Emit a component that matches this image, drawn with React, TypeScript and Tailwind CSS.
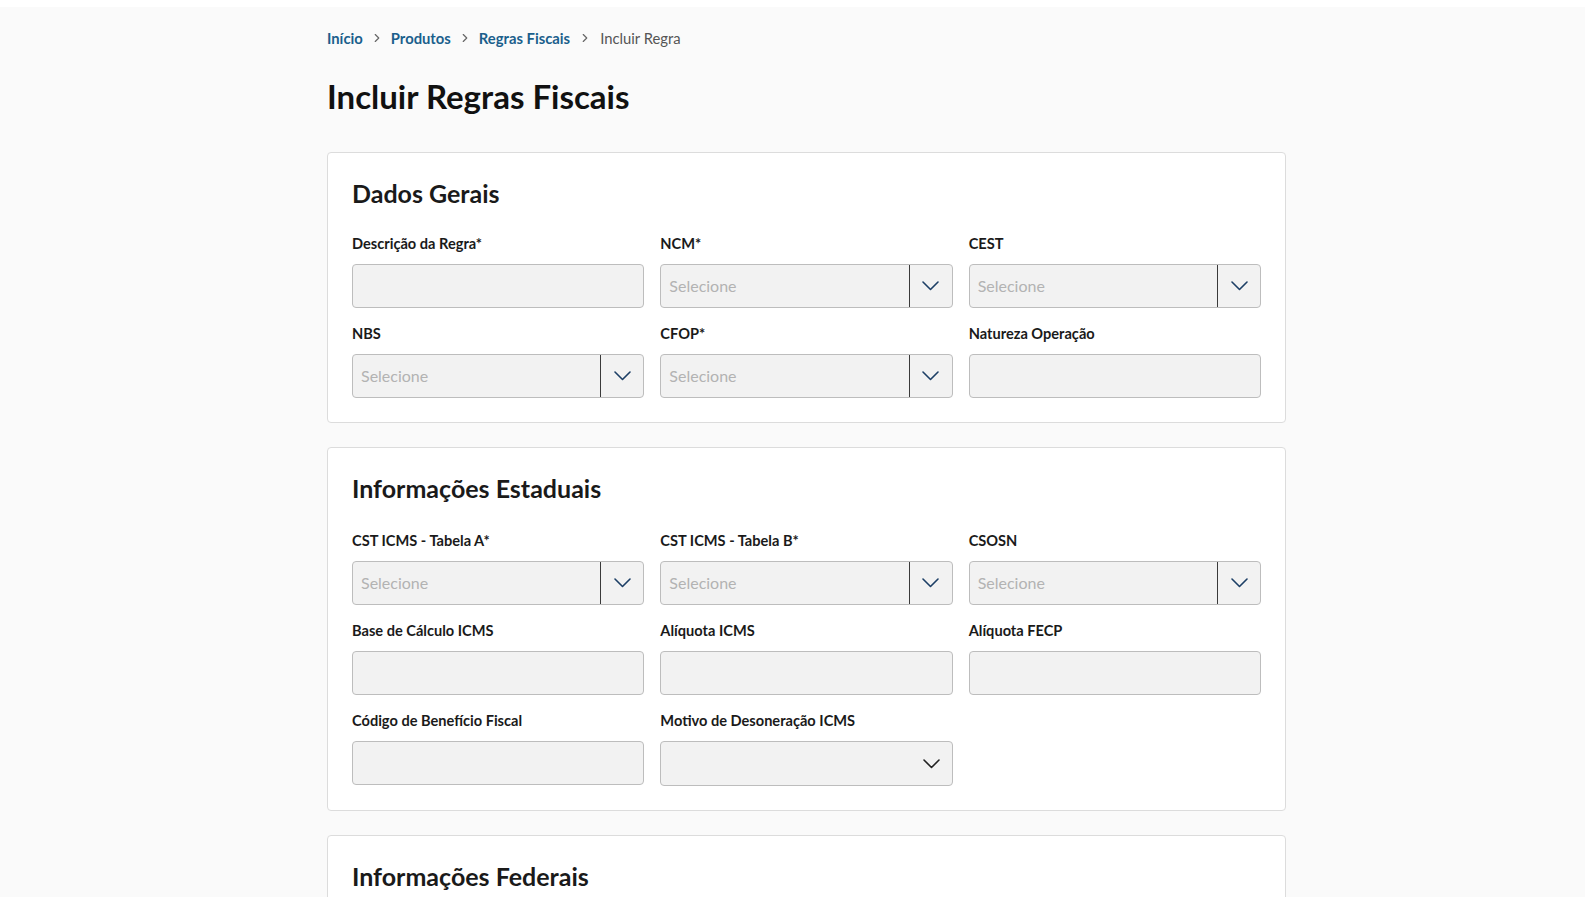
import { ChevronRight } from 'lucide-react'

const font = { fontFamily: '"Lato", "Noto Sans", sans-serif' }

function Chevron({ color = '#1d3f66' }: { color?: string }) {
  return (
    <svg width="17" height="10" viewBox="0 0 17 10" fill="none">
      <polyline points="1,1 8.5,8.5 16,1" stroke={color} strokeWidth="1.6" strokeLinecap="round" strokeLinejoin="round" />
    </svg>
  )
}

function Label({ children }: { children: string }) {
  return <label className="block h-5 text-[14.6px] leading-5 font-bold text-[#1a1a1a]">{children}</label>
}

function TextField({ label }: { label: string }) {
  return (
    <div className="flex flex-col gap-[10px]">
      <Label>{label}</Label>
      <div className="h-[44px] rounded-[4px] border border-[#bdbdbd] bg-[#f2f2f2]" />
    </div>
  )
}

function SelectField({ label }: { label: string }) {
  return (
    <div className="flex flex-col gap-[10px]">
      <Label>{label}</Label>
      <div className="flex h-[44px] rounded-[4px] border border-[#bdbdbd] bg-[#f2f2f2]">
        <span className="flex flex-1 items-center pl-[8px] text-[16px] text-[#b3b3b3]">Selecione</span>
        <span className="flex w-[43px] items-center justify-center border-l border-[#3a3a3a]">
          <Chevron />
        </span>
      </div>
    </div>
  )
}

function PlainSelect({ label }: { label: string }) {
  return (
    <div className="flex flex-col gap-[10px]">
      <Label>{label}</Label>
      <div className="flex h-[45px] items-center justify-end rounded-[4px] border border-[#bdbdbd] bg-[#f2f2f2] pr-[12px]">
        <Chevron color="#222" />
      </div>
    </div>
  )
}

function Card({ title, gridTop, children }: { title: string; gridTop?: string; children?: React.ReactNode }) {
  return (
    <section className="rounded-[4px] border border-[#dcdcdc] bg-white px-6 pt-6 pb-6">
      <h2 className="text-[25px] leading-8 font-bold text-[#1a1a1a]">{title}</h2>
      {children ? (
        <div className={`${gridTop ?? 'mt-[25px]'} grid grid-cols-3 gap-x-4 gap-y-4`}>{children}</div>
      ) : (
        <div className="h-[160px]" />
      )}
    </section>
  )
}

export default function App() {
  return (
    <div className="min-h-screen bg-[#fafafa]" style={font}>
      <div className="h-[7px] bg-white" />
      <main className="ml-[327px] w-[959px] pt-[21px]">
        <nav className="flex h-5 items-center text-[14.8px] leading-5">
          <a className="font-bold text-[#1a5f8c]">Início</a>
          <ChevronRight size={14} className="mx-[7px] text-[#666]" />
          <a className="font-bold text-[#1a5f8c]">Produtos</a>
          <ChevronRight size={14} className="mx-[7px] text-[#666]" />
          <a className="font-bold text-[#1a5f8c]">Regras Fiscais</a>
          <ChevronRight size={14} className="mx-[8px] text-[#666]" />
          <span className="text-[#555]">Incluir Regra</span>
        </nav>
        <h1 className="mt-[28px] text-[33px] leading-10 font-bold text-[#111]">Incluir Regras Fiscais</h1>
        <div className="mt-[36px] flex flex-col gap-[24px]">
          <Card title="Dados Gerais">
            <TextField label="Descrição da Regra*" />
            <SelectField label="NCM*" />
            <SelectField label="CEST" />
            <SelectField label="NBS" />
            <SelectField label="CFOP*" />
            <TextField label="Natureza Operação" />
          </Card>
          <Card title="Informações Estaduais" gridTop="mt-[27px]">
            <SelectField label="CST ICMS - Tabela A*" />
            <SelectField label="CST ICMS - Tabela B*" />
            <SelectField label="CSOSN" />
            <TextField label="Base de Cálculo ICMS" />
            <TextField label="Alíquota ICMS" />
            <TextField label="Alíquota FECP" />
            <TextField label="Código de Benefício Fiscal" />
            <PlainSelect label="Motivo de Desoneração ICMS" />
          </Card>
          <Card title="Informações Federais" />
        </div>
      </main>
    </div>
  )
}
